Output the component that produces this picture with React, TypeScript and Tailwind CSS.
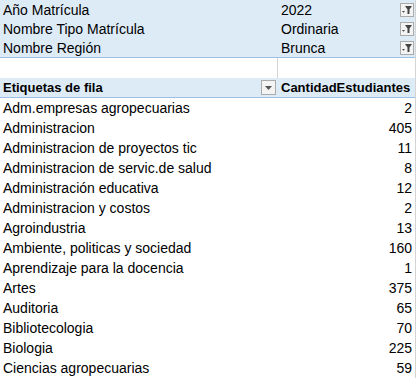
import React from "react";

const filters = [
  { label: "Año Matrícula", value: "2022" },
  { label: "Nombre Tipo Matrícula", value: "Ordinaria" },
  { label: "Nombre Región", value: "Brunca" },
];

const rows: [string, number][] = [
  ["Adm.empresas agropecuarias", 2],
  ["Administracion", 405],
  ["Administracion de proyectos tic", 11],
  ["Administracion de servic.de salud", 8],
  ["Administración educativa", 12],
  ["Administracion y costos", 2],
  ["Agroindustria", 13],
  ["Ambiente, politicas y sociedad", 160],
  ["Aprendizaje para la docencia", 1],
  ["Artes", 375],
  ["Auditoria", 65],
  ["Bibliotecologia", 70],
  ["Biologia", 225],
  ["Ciencias agropecuarias", 59],
];

function FilterButton() {
  return (
    <div className="w-[14px] h-[14px] border border-[#ababab] bg-[#f3f3f3] flex items-center justify-center">
      <svg width="12" height="12" viewBox="0 0 12 12">
        <path d="M4 2 H11 L8.5 5.5 V10 H6.5 V5.5 Z" fill="#444" />
        <path d="M1 7 H4 L2.5 8.8 Z" fill="#444" />
      </svg>
    </div>
  );
}

function DropButton() {
  return (
    <div className="w-[15px] h-[15px] border border-[#ababab] bg-[#f3f3f3] flex items-center justify-center">
      <svg width="9" height="6" viewBox="0 0 9 6">
        <path d="M1 1 H8 L4.5 5 Z" fill="#555" />
      </svg>
    </div>
  );
}

export default function App() {
  return (
    <div
      className="w-[418px] h-[378px] overflow-hidden bg-white text-black text-[14px]"
      style={{ fontFamily: '"Liberation Sans", Arial, sans-serif' }}
    >
      <div className="w-[416px] border-r border-[#d4d4d4]">
        {/* report filters */}
        <div className="bg-[#ddebf7] border-b border-[#9bc2e6]">
          {filters.map((f) => (
            <div key={f.label} className="flex h-[19px] items-center">
              <div className="w-[278px] shrink-0 pl-[3px] leading-none">{f.label}</div>
              <div className="flex-1 flex items-center justify-between pl-[3px] pr-[1px] leading-none">
                <span>{f.value}</span>
                <FilterButton />
              </div>
            </div>
          ))}
        </div>

        {/* blank row */}
        <div className="flex h-[20px]">
          <div className="w-[278px] shrink-0 border-r border-[#d4d4d4]" />
          <div className="flex-1" />
        </div>

        {/* header */}
        <div className="flex h-[20px] items-center bg-[#ddebf7] border-b border-[#9bc2e6] font-bold text-[13px]">
          <div className="w-[278px] shrink-0 pl-[3px] pr-[2px] flex items-center justify-between leading-none">
            <span>Etiquetas de fila</span>
            <DropButton />
          </div>
          <div className="flex-1 pl-[3px] leading-none whitespace-nowrap">CantidadEstudiantes</div>
        </div>

        {/* data */}
        {rows.map(([name, n]) => (
          <div key={name} className="flex h-[20px] items-center">
            <div className="w-[278px] shrink-0 pl-[3px] leading-none">{name}</div>
            <div className="flex-1 text-right pr-[3px] leading-none">{n}</div>
          </div>
        ))}
      </div>
    </div>
  );
}
